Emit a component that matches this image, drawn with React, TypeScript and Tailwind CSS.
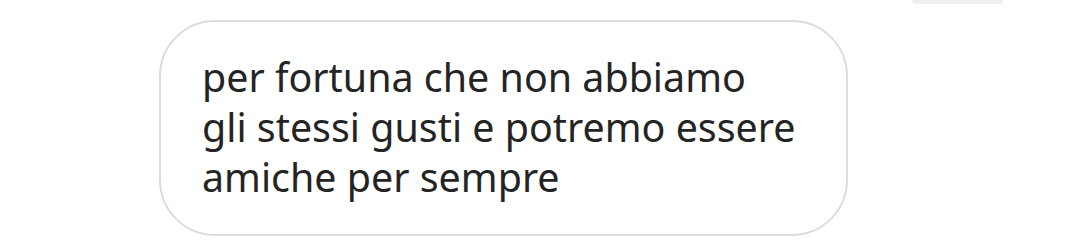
import React from "react";

const App = () => {
  return (
    <div className="w-[1080px] h-[247px] bg-white flex flex-col overflow-hidden">
      {/* bottom edge of the previous (own) bubble */}
      <div className="h-[4px] flex justify-end pr-[77px]">
        <div className="w-[91px] h-[4px] rounded-b-[6px] bg-[#eeeeee]" />
      </div>

      <div className="mt-[16px] ml-[159px] w-[689px] h-[216px] rounded-[56px] border-2 border-[#dcdcdc] bg-white pl-[41px] pt-[30px]">
        <p
          className="text-[39.4px] leading-[50px] text-[#242424]"
          style={{ fontFamily: '"Noto Sans", "Open Sans", sans-serif' }}
        >
          per fortuna che non abbiamo
          <br />
          gli stessi gusti e potremo essere
          <br />
          amiche per sempre
        </p>
      </div>
    </div>
  );
};

export default App;
